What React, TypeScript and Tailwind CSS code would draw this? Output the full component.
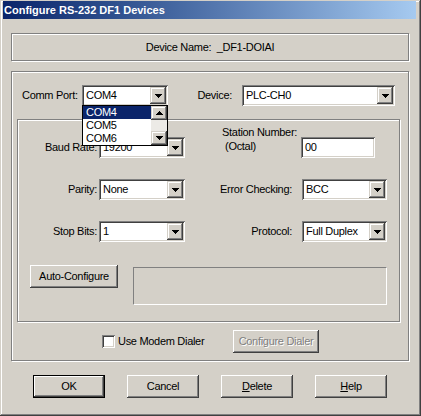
import React from "react";

const etched = "border border-[#808080] shadow-[inset_1px_1px_0_#fff,1px_1px_0_#fff]";
const sunken =
  "bg-white shadow-[inset_1px_1px_0_#808080,inset_-1px_-1px_0_#fff,inset_2px_2px_0_#404040,inset_-2px_-2px_0_#d4d0c8]";
const button =
  "bg-[#d4d0c8] shadow-[inset_-1px_-1px_0_#404040,inset_1px_1px_0_#fff,inset_-2px_-2px_0_#808080,inset_2px_2px_0_#d4d0c8]";
const arrowBtn =
  "bg-[#d4d0c8] shadow-[inset_-1px_-1px_0_#404040,inset_1px_1px_0_#d4d0c8,inset_-2px_-2px_0_#808080,inset_2px_2px_0_#fff]";

function Arrow({ up = false }: { up?: boolean }) {
  return (
    <svg width="7" height="4" viewBox="0 0 7 4" shapeRendering="crispEdges">
      <polygon points={up ? "3.5,0 7,4 0,4" : "0,0 7,0 3.5,4"} fill="#000" />
    </svg>
  );
}

function Combo({ value, className }: { value: string; className: string }) {
  return (
    <div className={`${sunken} ${className} h-[21px] flex p-[2px] shrink-0`}>
      <span className="flex-1 pl-[2px] leading-[17px] whitespace-nowrap overflow-hidden">{value}</span>
      <div className={`${arrowBtn} w-[16px] h-[17px] flex items-center justify-center`}>
        <Arrow />
      </div>
    </div>
  );
}

function Label({ text, className }: { text: string; className: string }) {
  return <div className={`${className} h-[21px] flex items-center justify-end shrink-0 whitespace-nowrap`}>{text}</div>;
}

export default function App() {
  return (
    <div className="w-[421px] h-[416px] overflow-hidden bg-[#d4d0c8] flex flex-col pt-[1px] pl-[3px] pr-[5px] text-[11px] text-black font-['Liberation_Sans',Arial,sans-serif] tracking-[-0.3px] shadow-[inset_-1px_-1px_0_#404040,inset_1px_1px_0_#d4d0c8,inset_-2px_-2px_0_#808080,inset_2px_2px_0_#fff]">
      {/* title bar */}
      <div className="h-[18px] flex items-center pl-[1px] bg-linear-to-r from-[#0a246a] to-[#a6caf0] text-white font-bold tracking-normal">
        Configure RS-232 DF1 Devices
      </div>

      <div className="pl-[8px] flex flex-col">
        <div className={`${etched} mt-[14px] w-[398px] h-[28px] flex items-center justify-center whitespace-pre`}>
          Device Name:  _DF1-DOIAI
        </div>

        <div className={`${etched} relative mt-[10px] w-[398px] h-[290px] flex flex-col`}>
          <div className="mt-[13px] pl-[10px] flex items-center">
            <div className="w-[60px] shrink-0">Comm Port:</div>
            <Combo value="COM4" className="w-[86px]" />
            <Label text="Device:" className="w-[64px]" />
            <Combo value="PLC-CH0" className="ml-[10px] w-[153px]" />
          </div>

          <div className={`${etched} mt-[13px] ml-[5px] w-[383px] h-[203px] flex flex-col`}>
            <div className="mt-[17px] flex items-start">
              <Label text="Baud Rate:" className="w-[79px]" />
              <Combo value="19200" className="ml-[2px] w-[86px]" />
              <div className="w-[112px] flex justify-end">
                <div className="-mt-[12px] leading-[14px] whitespace-nowrap">
                  <div>Station Number:</div>
                  <div className="pl-[3px]">(Octal)</div>
                </div>
              </div>
              <div className={`${sunken} ml-[4px] w-[74px] h-[21px] pl-[4px] leading-[21px]`}>00</div>
            </div>

            <div className="mt-[21px] flex items-start">
              <Label text="Parity:" className="w-[79px]" />
              <Combo value="None" className="ml-[2px] w-[86px]" />
              <Label text="Error Checking:" className="w-[107px]" />
              <Combo value="BCC" className="ml-[10px] w-[85px]" />
            </div>

            <div className="mt-[21px] flex items-start">
              <Label text="Stop Bits:" className="w-[79px]" />
              <Combo value="1" className="ml-[2px] w-[86px]" />
              <Label text="Protocol:" className="w-[107px]" />
              <Combo value="Full Duplex" className="ml-[10px] w-[85px]" />
            </div>

            <div className="mt-[23px] flex items-start">
              <div className={`${button} ml-[12px] w-[88px] h-[23px] flex items-center justify-center`}>
                Auto-Configure
              </div>
              <div className="ml-[15px] mt-[2px] w-[254px] h-[38px] border border-t-[#808080] border-l-[#808080] border-b-white border-r-white" />
            </div>
          </div>

          <div className="mt-[8px] h-[23px] flex items-center">
            <div className={`${sunken} ml-[90px] w-[13px] h-[13px] shrink-0`} />
            <div className="w-[118px] pl-[3px] whitespace-nowrap">Use Modem Dialer</div>
            <div
              className={`${button} w-[86px] h-[23px] flex items-center justify-center text-[#808080] [text-shadow:1px_1px_0_#fff]`}
            >
              Configure Dialer
            </div>
          </div>

          {/* open Comm Port list */}
          <div className="absolute left-[70px] top-[33px] w-[86px] h-[41px] border border-black bg-white flex">
            <div className="flex-1 flex flex-col">
              <div className="h-[13px] leading-[13px] pl-[3px] bg-[#0a246a] text-white">COM4</div>
              <div className="h-[13px] leading-[13px] pl-[3px]">COM5</div>
              <div className="h-[13px] leading-[13px] pl-[3px]">COM6</div>
            </div>
            <div className="w-[16px] flex flex-col bg-[#eceae6]">
              <div className={`${arrowBtn} h-[14px] flex items-center justify-center`}>
                <Arrow up />
              </div>
              <div className="flex-1" />
              <div className={`${arrowBtn} h-[14px] flex items-center justify-center`}>
                <Arrow />
              </div>
            </div>
          </div>
        </div>
      </div>

      <div className="mt-[14px] pl-[30px] flex gap-[22px]">
        <div className="w-[72px] h-[23px] border border-black">
          <div className={`${button} w-full h-full flex items-center justify-center`}>OK</div>
        </div>
        <div className={`${button} w-[72px] h-[23px] flex items-center justify-center`}>Cancel</div>
        <div className={`${button} w-[72px] h-[23px] flex items-center justify-center`}>
          <span>
            <span className="underline">D</span>elete
          </span>
        </div>
        <div className={`${button} w-[72px] h-[23px] flex items-center justify-center`}>
          <span>
            <span className="underline">H</span>elp
          </span>
        </div>
      </div>
    </div>
  );
}
